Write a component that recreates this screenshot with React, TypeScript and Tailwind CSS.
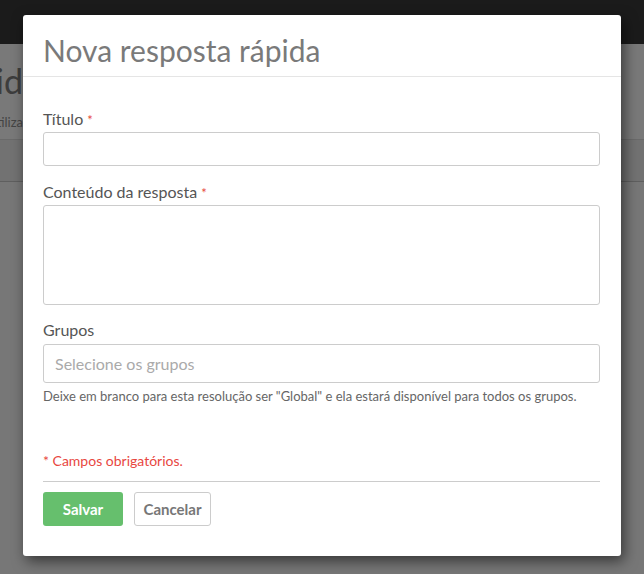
export default function App() {
  return (
    <div className="relative h-[574px] w-[644px] overflow-hidden bg-[#797979] font-['Lato','Liberation_Sans',sans-serif]">
      {/* page behind the modal, dimmed */}
      <div className="h-[44px] bg-[#1b1b1b]" />
      <div className="h-[95px] overflow-hidden pt-[17px]">
        <div className="flex w-[23px] justify-end overflow-hidden">
          <span className="shrink-0 whitespace-nowrap text-[34px] leading-[40px] text-[#3d3d3d]">Respostas rápid</span>
        </div>
        <div className="mt-[12px] flex w-[23px] justify-end overflow-hidden">
          <span className="shrink-0 whitespace-nowrap text-[13px] leading-[18px] text-[#444]">Utiliza</span>
        </div>
      </div>
      <div className="h-px bg-[#6a6a6a]" />
      <div className="h-[42px] border-b border-[#5f5f5f] bg-[#727272]" />
      <div className="h-full bg-[#777]" />

      {/* modal */}
      <div className="absolute left-[23px] top-[15px] w-[598px] rounded-[3px] bg-white shadow-[3px_5px_14px_rgba(0,0,0,0.55)]">
        <div className="border-b border-[#e5e5e5] px-[20px] pb-[8px] pt-[17px]">
          <h2 className="text-[30px] font-normal leading-[36px] text-[#7a7a7a]">Nova resposta rápida</h2>
        </div>

        <div className="pl-[20px] pr-[21px] pb-[30px] pt-[32px]">
          <label className="mb-[2px] block text-[16px] leading-[20px] text-[#555]">
            Título <span className="text-[13px] text-[#e74c3c]">*</span>
          </label>
          <input className="block h-[34px] w-full rounded-[3px] border border-[#ccc] px-3 text-[15px] outline-none" />

          <label className="mb-[2px] mt-[16px] block text-[16px] leading-[20px] text-[#555]">
            Conteúdo da resposta <span className="text-[13px] text-[#e74c3c]">*</span>
          </label>
          <textarea className="block h-[100px] w-full resize-none rounded-[3px] border border-[#ccc] px-3 py-2 text-[15px] outline-none" />

          <label className="mb-[4px] mt-[15px] block text-[16px] leading-[20px] text-[#555]">Grupos</label>
          <div className="flex h-[39px] items-center rounded-[3px] border border-[#ccc] px-[11px] text-[16px] text-[#aaa]">
            Selecione os grupos
          </div>
          <p className="mt-[5px] text-[13px] leading-[17px] text-[#666]">
            Deixe em branco para esta resolução ser "Global" e ela estará disponível para todos os grupos.
          </p>

          <p className="mt-[46px] text-[14px] leading-[20px] text-[#e8473f]">* Campos obrigatórios.</p>
          <div className="mt-[10px] h-px bg-[#ccc]" />

          <div className="mt-[10px] flex gap-[11px]">
            <button className="h-[34px] w-[80px] rounded-[3px] bg-[#66bf6d] text-[15px] font-bold text-white">
              Salvar
            </button>
            <button className="h-[34px] w-[77px] rounded-[3px] border border-[#ccc] bg-white text-[15px] font-bold text-[#777]">
              Cancelar
            </button>
          </div>
        </div>
      </div>
    </div>
  );
}
